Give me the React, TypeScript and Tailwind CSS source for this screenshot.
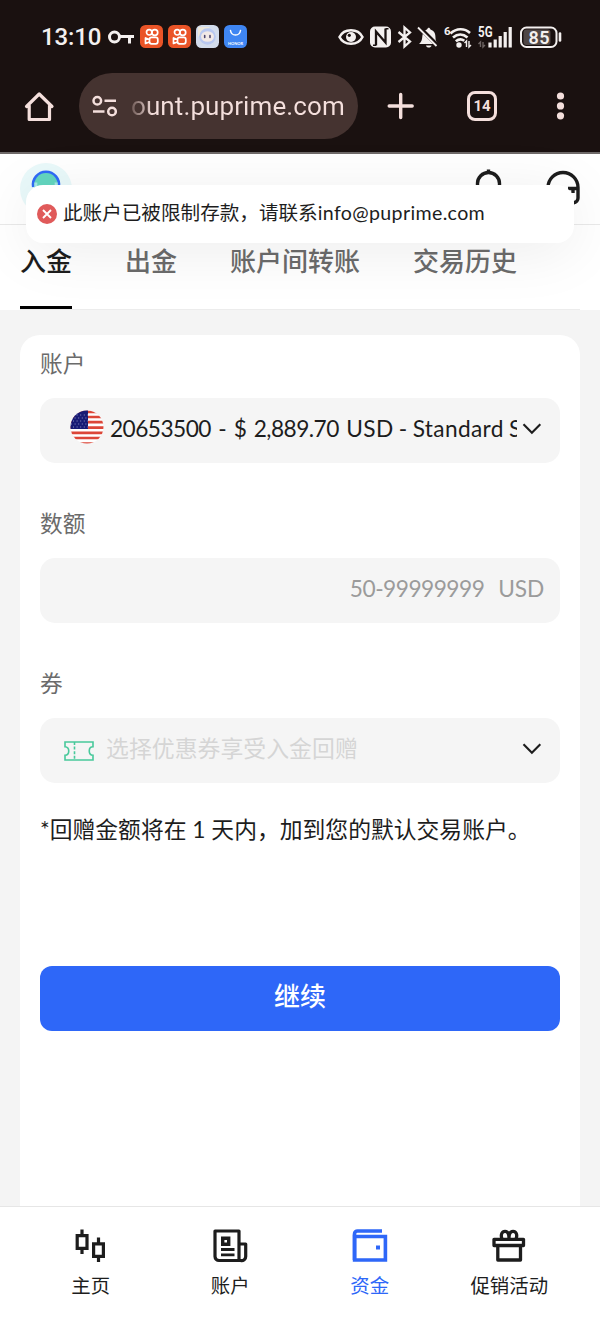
import type { ReactNode } from 'react';

type Tab = {
    label: string;
    active?: boolean;
};

type NavItem = {
    label: string;
    icon: ReactNode;
    active?: boolean;
};

const tabs: Tab[] = [
    { label: '入金', active: true },
    { label: '出金' },
    { label: '账户间转账' },
    { label: '交易历史' },
];

const navItems: NavItem[] = [
    { label: '主页', icon: <CandlesIcon /> },
    { label: '账户', icon: <NewsIcon /> },
    { label: '资金', icon: <WalletIcon />, active: true },
    { label: '促销活动', icon: <GiftIcon /> },
];

function CandlesIcon() {
    return (
        <svg width="36" height="36" viewBox="0 0 36 36" fill="none" stroke="currentColor" strokeWidth="3.2">
            <path d="M9 1.500v6M9 20v6M25.500 9.500v6M25.500 28v6" />
            <path d="M4.200 7.700h9.800v12.600H4.200zM20.600 15.800h9.800v12.500h-9.800z" />
        </svg>
    );
}

function NewsIcon() {
    return (
        <svg width="36" height="36" viewBox="0 0 36 36" fill="none" stroke="currentColor" strokeWidth="3.200">
            <path d="M29 32.500H7a4 4 0 0 1-4-4V3h24v29.500" strokeLinejoin="round" />
            <path d="M28 16h5.700v12.500a4 4 0 0 1-5 4" strokeLinejoin="round" />
            <path d="M10.700 10.200h6v6h-6z" strokeWidth="3.400" />
            <path d="M9 21.500h13.500M9 26.800h13.500" strokeWidth="2.800" />
        </svg>
    );
}

function WalletIcon() {
    return (
        <svg width="36" height="36" viewBox="0 0 36 36" fill="none" stroke="currentColor">
            <path d="M30 3H5.500A3 3 0 0 0 2.500 6v26" strokeWidth="3.600" />
            <path d="M2.600 8.500h30.800v23.500H2.600z" strokeWidth="3.600" />
            <path d="M24 17.500h4v4h-4z" fill="currentColor" stroke="none" />
        </svg>
    );
}

function GiftIcon() {
    return (
        <svg width="36" height="36" viewBox="0 0 36 36" fill="none" stroke="currentColor" strokeWidth="3.300" strokeLinejoin="round">
            <path d="M3 11.300h29.500v6.200h-29.500zM6.800 17.500h22.700v14.500H6.800z" />
            <path d="M10.800 10.500c-1.300-4 .3-7.200 3.200-7.200s4 2.700 4 6.700c0-4 1.300-6.700 4.100-6.700s4.500 3.200 3.100 7.200" />
        </svg>
    );
}

function VideoAppIcon() {
    return (
        <svg width="23" height="23" viewBox="0 0 23 23" fill="none" stroke="#fff" strokeWidth="1.700">
            <rect width="23" height="23" rx="5.500" fill="#ea5427" stroke="none" />
            <circle cx="9.200" cy="7.300" r="2.700" />
            <circle cx="14.800" cy="7.500" r="2.900" />
            <rect x="9.500" y="12.400" width="8.300" height="6.400" rx="2" />
            <path d="M9.500 14.500l-4-1.500v5.500l4-1.500" strokeLinejoin="round" />
        </svg>
    );
}

function AssistantAppIcon() {
    return (
        <svg width="23" height="23" viewBox="0 0 23 23">
            <rect width="23" height="23" rx="5.500" fill="#d3dcec" />
            <path d="M2 2h12L2 12z" fill="#ece6da" />
            <circle cx="11.500" cy="11.500" r="8.300" fill="#b9c8f0" />
            <ellipse cx="11.500" cy="11.500" rx="6.500" ry="5.300" fill="#f2e9e6" />
            <path d="M8.700 10.500v2M14 10.500v2" stroke="#4c4771" strokeWidth="1.600" strokeLinecap="round" />
        </svg>
    );
}

function StoreAppIcon() {
    return (
        <span className="relative block h-[23px] w-[23px]">
            <svg width="23" height="23" viewBox="0 0 23 23" fill="none">
                <rect width="23" height="23" rx="5.500" fill="#3f86f3" />
                <path d="M6.500 5.500c1 6 9 6 10 0" stroke="#fff" strokeWidth="1.500" strokeLinecap="round" />
            </svg>
            <span className="absolute inset-x-0 bottom-[2px] text-center text-[4px] leading-[5px] font-bold text-white">
                HONOR
            </span>
        </span>
    );
}

function StatusBar() {
    return (
        <div className="flex h-[73px] items-center pl-[41px] text-[#f4f0ef]">
            <span className="w-[66px] font-['Roboto',sans-serif] text-[24px] leading-[30px] font-medium tracking-[-0.100px]">
                13:10
            </span>
            <svg className="ml-px" width="27" height="16" viewBox="0 0 27 16" fill="none" stroke="currentColor" strokeWidth="3">
                <circle cx="6.500" cy="8" r="5" />
                <path d="M11.500 7.500H26M21.500 8v6.500" />
            </svg>
            <div className="ml-[5px] flex gap-[5px]">
                <VideoAppIcon />
                <VideoAppIcon />
                <AssistantAppIcon />
                <StoreAppIcon />
            </div>

            {/* system indicators */}
            <svg className="ml-[91px] font-['Roboto',sans-serif]" width="225" height="28" viewBox="0 0 225 28" fill="none" stroke="currentColor">
                <path d="M1.500 14C6 5 20 5 24.500 14 20 23 6 23 1.500 14z" strokeWidth="2.500" />
                <circle cx="13" cy="14" r="5" fill="currentColor" stroke="none" />
                <circle cx="11.300" cy="12.300" r="1.600" fill="#1a1110" stroke="none" />

                <rect x="32" y="3.500" width="21" height="21" rx="5" fill="currentColor" stroke="none" />
                <path d="M38 22.500V8.500l9.500 11V5.500" stroke="#1a1110" strokeWidth="2.300" />
                <path d="M35 22.200h3M47.500 5.800h3" stroke="#1a1110" strokeWidth="1.500" />

                <path d="M60.500 9l11.500 9.500-5.500 5V4.500l5.500 5L60.500 19" strokeWidth="2.300" />

                <path d="M81 21c3.500-3 3-6 3.500-9 .5-3.500 3-5 4.500-5.500 1-2.300 2.500-2.300 3.500 0 4.500 1.500 5 5 5 8.500 0 2.500 1 4 2.500 6zM88 22.500h5.500c-.5 2.800-5 2.800-5.500 0z" fill="currentColor" stroke="none" />
                <path d="M81 4l18.500 18.500" stroke="#1a1110" strokeWidth="4" />
                <path d="M80 4.500l18.500 18.500" strokeWidth="1.800" />

                <path d="M112.500 10.500c6-5.500 14-5.500 19.500-.5M115 14.500c4.500-4 10-4 14.500 0M117.800 18.300c3-2.500 6-2.500 8.500-.5" strokeWidth="2.600" />
                <circle cx="121" cy="22" r="2.700" fill="currentColor" stroke="none" />
                <path d="M128.500 24v-6l-2 2M131 18v6l2-2" strokeWidth="1.400" />

                <path d="M142.500 24v-5l-2 2M145 19v5l2-2" stroke="#6d6463" strokeWidth="1.400" />
                <path d="M152 24.500v-5M157.200 24.500v-8M162.200 24.500V13M167.200 24.500V9M172.200 24.500V4" strokeWidth="3.200" />
                <text x="106" y="12" fill="currentColor" stroke="none" fontSize="11.500" fontWeight="700">6</text>
                <text x="140" y="14" fill="currentColor" stroke="none" fontSize="14" fontWeight="700" textLength="14.500" lengthAdjust="spacingAndGlyphs">5G</text>

                <rect x="183" y="4.500" width="35.500" height="19.500" rx="5.500" strokeWidth="2" />
                <rect x="185.500" y="6.500" width="27" height="15.500" rx="3" fill="#4f4645" stroke="none" />
                <path d="M222 10.500v7" strokeWidth="2.600" strokeLinecap="round" />
                <text x="190.500" y="20.500" fill="currentColor" stroke="none" fontSize="18" fontWeight="600" textLength="21" lengthAdjust="spacing">85</text>
            </svg>
        </div>
    );
}

function AddressBar() {
    return (
        <div className="flex h-[81px] items-start border-b-2 border-[#6f6a69] text-[#f4dfdc]">
            <svg className="mt-[18px] ml-[24px]" width="31" height="31" viewBox="0 0 31 31" fill="none" stroke="currentColor" strokeWidth="3.200" strokeLinejoin="round" strokeLinecap="round">
                <path d="M2.500 15.500L15.200 3l12.800 12.500M5.200 14.500v14h20.300v-14" />
            </svg>
            <div className="ml-[24px] flex h-[66px] w-[279px] items-center rounded-full bg-[#453330] pl-[12px]">
                <svg width="26" height="22" viewBox="0 0 26 22" fill="none" stroke="currentColor" strokeWidth="2.500">
                    <circle cx="6.300" cy="5.800" r="3.800" />
                    <path d="M13.500 5.800H25M2 16.500h11.500" />
                    <circle cx="21" cy="16.500" r="3.800" />
                </svg>
                <span className="ml-[14px] bg-linear-to-r from-[#6d5854] from-0% to-[#f4dfdc] to-10% bg-clip-text font-['Roboto',sans-serif] text-[26px] leading-[34px] tracking-[0.1px] text-transparent">
                    ount.puprime.com
                </span>
            </div>
            <svg className="mt-[19px] ml-[29px]" width="28" height="28" viewBox="0 0 28 28" stroke="currentColor" strokeWidth="3.400" strokeLinecap="round">
                <path d="M13.700 2.500v23M2.200 14h23" />
            </svg>
            <div className="mt-[18px] ml-[52px] flex h-[30px] w-[30px] items-center justify-center rounded-[8px] border-[3px] border-current font-['Roboto',sans-serif] text-[15px] leading-none font-bold">
                14
            </div>
            <svg className="mt-[18px] ml-[59px]" width="9" height="30" viewBox="0 0 9 30" fill="currentColor">
                <circle cx="4.500" cy="5" r="3.600" />
                <circle cx="4.500" cy="14.900" r="3.600" />
                <circle cx="4.500" cy="24.800" r="3.600" />
            </svg>
        </div>
    );
}

function SiteHeader() {
    return (
        <header className="flex h-[71px] items-start border-b border-[#e9e9e9] bg-white">
            <svg className="mt-[9px] ml-[20px]" width="52" height="52" viewBox="0 0 52 52" fill="none">
                <circle cx="26" cy="26" r="26" fill="#e9f9fa" />
                <circle cx="26" cy="22" r="12.500" fill="#63d6bf" />
                <path d="M13.200 24a13 13 0 1 1 25.600 0" stroke="#2f6bf6" strokeWidth="2.600" />
                <path d="M15.800 24v-4.500M36.200 24v-4.500" stroke="#a5e6e6" strokeWidth="3" />
            </svg>
            <svg className="mt-[15px] ml-[403px]" width="27" height="34" viewBox="0 0 27 34" fill="none" stroke="#1d1d1d" strokeWidth="3.400">
                <path d="M2.500 28V14.500a11 11 0 0 1 22 0V28M13.500 .5v3" />
            </svg>
            <svg className="mt-[16px] ml-[44px]" width="34" height="38" viewBox="0 0 34 38" fill="none" stroke="#1d1d1d" strokeWidth="3.400">
                <path d="M2 26V17.500a15 15 0 0 1 30 0V28q0 4-5 5M22 18.500h10M27 19v4" />
            </svg>
        </header>
    );
}

function Toast() {
    return (
        <div className="absolute top-[185px] left-[26px] flex h-[58px] w-[548px] items-center rounded-[17px] bg-white pl-[11px] shadow-[0_8px_60px_rgba(0,0,0,0.08)]">
            <svg width="20" height="20" viewBox="0 0 20 20">
                <circle cx="10" cy="10" r="10" fill="#e05a5a" />
                <path d="M6 6l8 8M14 6l-8 8" stroke="#fff" strokeWidth="1.900" />
            </svg>
            <p className="ml-[6px] pb-[2px] text-[19.600px] leading-[28px] whitespace-nowrap">
                此账户已被限制存款，请联系
                <span className="tracking-[0.350px]">info@puprime.com</span>
            </p>
        </div>
    );
}

function FlagIcon() {
    return (
        <svg width="34" height="34" viewBox="0 0 34 34">
            <clipPath id="flag">
                <circle cx="17" cy="17" r="16.500" />
            </clipPath>
            <g clipPath="url(#flag)">
                <path d="M0 0h34v34H0z" fill="#fff" />
                <path d="M0 1.800h34M0 7h34M0 12.200h34M0 17.600h34M0 22.800h34M0 28h34M0 33.500h34" stroke="#dc4638" strokeWidth="2.700" />
                <path d="M0 0h18v19H0z" fill="#171a75" />
                <path d="M3 5h15M1 8h17M3 11h15M1 14h17M3 17h15" stroke="#8f91c2" strokeWidth="1" strokeDasharray="1 2.600" />
            </g>
        </svg>
    );
}

function TicketIcon() {
    return (
        <svg width="30" height="20" viewBox="0 0 30 20" fill="none" stroke="#48c99b" strokeWidth="1.600">
            <path d="M1 1h28v4.800c-5 0-5 8.400 0 8.400V19H1v-4.800c5 0 5-8.400 0-8.400z" />
            <path d="M10.500 1v18" strokeDasharray="3 1.600" />
        </svg>
    );
}

function Chevron() {
    return (
        <svg className="shrink-0" width="20" height="14" viewBox="0 0 20 14" fill="none" stroke="#1d1d1d" strokeWidth="2.100">
            <path d="M1.500 2.200l8.400 8.600 8.400-8.600" />
        </svg>
    );
}

function Field({ label, children }: { label: string; children: ReactNode }) {
    return (
        <div>
            <p className="text-[22.700px] leading-[32px] text-[#6b6b6b]">{label}</p>
            <div className="mt-[18px] flex h-[65px] items-center rounded-[15px] bg-[#f5f5f5] pb-[4px]">
                {children}
            </div>
        </div>
    );
}

function DepositForm() {
    return (
        <section className="mx-5 mt-[25px] h-[871px] rounded-t-[20px] bg-white px-5 pt-[13px]">
            <div className="flex flex-col gap-[45px]">
                <Field label="账户">
                    <span className="mb-[3px] ml-[30px]">
                        <FlagIcon />
                    </span>
                    <span className="ml-[6px] w-[407px] overflow-hidden text-[22.700px] leading-[32px] tracking-[0.350px] [word-spacing:-1px] whitespace-nowrap">
                        <span className="tracking-[-0.550px] [word-spacing:2.200px]">20653500 - $ 2,889.70 </span>
                        USD - Standard STP
                    </span>
                    <span className="ml-[5px]">
                        <Chevron />
                    </span>
                </Field>
                <Field label="数额">
                    <span className="ml-auto text-[22.700px] leading-[32px] tracking-[-0.500px] text-[#9b9b9b]">
                        50-99999999
                    </span>
                    <span className="mr-[16px] ml-[14px] text-[22.700px] leading-[32px] tracking-[-0.200px] text-[#9b9b9b]">
                        USD
                    </span>
                </Field>
                <Field label="券">
                    <span className="mt-[4px] ml-[24px]">
                        <TicketIcon />
                    </span>
                    <span className="mb-[2px] ml-[12px] text-[22.900px] leading-[32px] text-[#d5d5d5]">
                        选择优惠券享受入金回赠
                    </span>
                    <span className="mr-[18px] ml-auto">
                        <Chevron />
                    </span>
                </Field>
            </div>
            <p className="mt-[30px] text-[22.800px] leading-[32px] whitespace-nowrap">
                *回赠金额将在 1 天内，加到您的默认交易账户。
            </p>
            <button className="mt-[121px] flex h-[65px] w-full items-center justify-center rounded-[12px] bg-[#2e67f8] pb-[5px] text-[26px] leading-[36px] font-medium text-white">
                继续
            </button>
        </section>
    );
}

export default function App() {
    return (
        <div className="relative h-[1332px] w-[600px] overflow-hidden bg-[#f4f4f4] font-['Lato','Noto_Sans_CJK_SC',sans-serif] text-[#1d1d1d]">
            <div className="bg-[#1a1110]">
                <StatusBar />
                <AddressBar />
            </div>
            <SiteHeader />
            <nav className="h-[85px] bg-white px-5">
                <ul className="flex h-full gap-[53px] border-b border-[#ececec] text-[26px] leading-[36px] font-medium">
                    {tabs.map((tab) => (
                        <li
                            key={tab.label}
                            className={
                                tab.active
                                    ? 'border-b-[3px] border-black pt-[18px]'
                                    : 'pt-[18px] text-[#6b6b6b]'
                            }
                        >
                            {tab.label}
                        </li>
                    ))}
                </ul>
            </nav>
            <DepositForm />
            <nav className="flex h-[126px] border-t border-[#e6e6e6] bg-white px-[21px] pt-[21px]">
                {navItems.map((item) => (
                    <div
                        key={item.label}
                        className={
                            item.active
                                ? 'flex flex-1 flex-col items-center text-[#2e67f8]'
                                : 'flex flex-1 flex-col items-center'
                        }
                    >
                        {item.icon}
                        <span className="mt-[8px] text-[19.400px] leading-[28px]">{item.label}</span>
                    </div>
                ))}
            </nav>
            <Toast />
        </div>
    );
}
